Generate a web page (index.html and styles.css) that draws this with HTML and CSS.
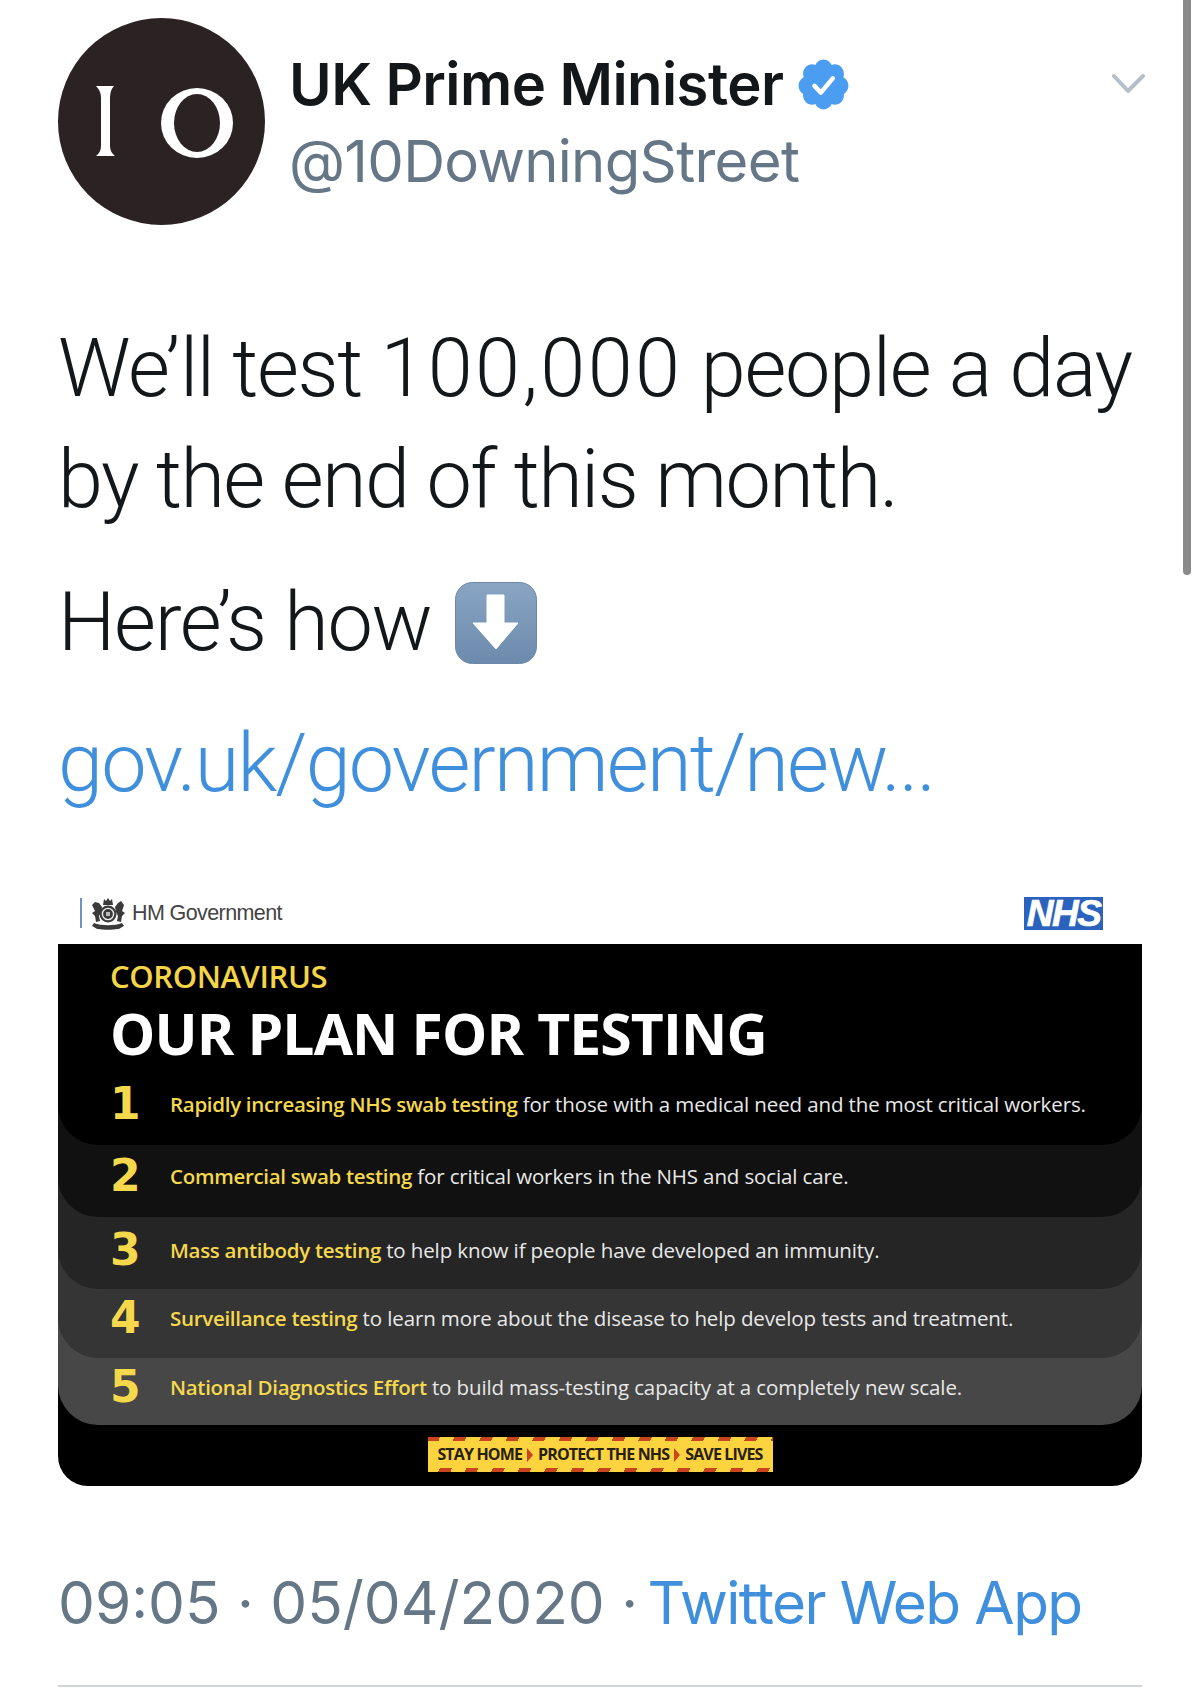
FILE: index.html
```html
<!DOCTYPE html>
<html lang="en">
<head>
<meta charset="utf-8">
<title>UK Prime Minister tweet</title>
<link rel="stylesheet" href="styles.css">
</head>
<body>
<div class="scrollbar"></div>
<main class="tweet">
  <header class="head">
    <svg class="avatar" viewBox="0 0 207 207" role="img" aria-label="10">
      <circle cx="103.5" cy="103.5" r="103.5" fill="#2b2224"/>
      <path fill="#fff" d="M38 68 L56 68 Q52 72 52 80 L52 128 Q52 134 57 138 L38 138 Q43 134 43 128 L43 80 Q43 73 38 68z"/>
      <ellipse cx="139" cy="105" rx="36" ry="35" fill="#fff"/>
      <ellipse cx="139" cy="105" rx="23" ry="29" fill="#2b2224"/>
    </svg>
    <div class="names">
      <div class="name">UK Prime Minister
        <svg class="badge" viewBox="0 0 24 24"><path fill="#4a9df0" d="M22.5 12.5c0-1.58-.875-2.95-2.148-3.6.154-.435.238-.905.238-1.4 0-2.21-1.71-3.998-3.818-3.998-.47 0-.92.084-1.336.25C14.818 2.415 13.51 1.5 12 1.5s-2.816.917-3.437 2.25c-.415-.165-.866-.25-1.336-.25-2.11 0-3.818 1.79-3.818 4 0 .494.083.964.237 1.4-1.272.65-2.147 2.018-2.147 3.6 0 1.495.782 2.798 1.942 3.486-.02.17-.032.34-.032.514 0 2.21 1.708 4 3.818 4 .47 0 .92-.086 1.335-.25.62 1.334 1.926 2.25 3.437 2.25 1.512 0 2.818-.916 3.437-2.25.415.163.865.248 1.336.248 2.11 0 3.818-1.79 3.818-4 0-.174-.012-.344-.033-.513 1.158-.687 1.943-1.99 1.943-3.484z"/><path fill="none" stroke="#fff" stroke-width="1.9" stroke-linecap="round" stroke-linejoin="round" d="M8.2 12.6l2.7 2.8 5-6"/></svg>
      </div>
      <div class="handle">@10DowningStreet</div>
    </div>
    <svg class="chevron" viewBox="0 0 34 22"><path fill="none" stroke="#b4bfc9" stroke-width="4" stroke-linecap="round" stroke-linejoin="round" d="M3 3l14 15L32 3"/></svg>
  </header>

  <div class="body">
    <p class="lines"><span class="l1">We’ll test <span class="digits">100,000</span> people a day</span><br><span class="l2">by the end of this month.</span></p>
    <p class="how">Here’s how
      <svg class="emoji" viewBox="0 0 82 82"><defs><linearGradient id="eg" x1="0" y1="0" x2="0" y2="1"><stop offset="0" stop-color="#8aa5c4"/><stop offset="1" stop-color="#6c8aac"/></linearGradient></defs><rect x=".5" y=".5" width="81" height="81" rx="17" fill="url(#eg)" stroke="#6d88a6"/><path fill="#fff" stroke="#fff" stroke-linejoin="round" d="M32 13h17v28h14L41 67 18 41h14z"/></svg>
    </p>
    <p class="link">gov.uk/government/new...</p>
  </div>

  <figure class="card">
    <div class="card-top">
      <div class="hmg">
        <svg class="crest" viewBox="0 0 36 34">
          <g fill="#3a3a3a">
            <path d="M14 3l2 2 2-3 2 3 2-2 1 6H13z"/>
            <circle cx="18" cy="18" r="8.5"/>
            <path d="M2 9l3-3 4 1 3 4-1 5-2 4 1 5-4 1-1-6-3-3 3-2zM34 9l-3-4-3 2-3 4 1 5 2 4-1 5 4 1 1-6 3-3-3-2z"/>
            <path d="M4 27c7 3 21 3 28 0l2 3c-3 1-4 3-6 3-6 1-14 1-20 0-2 0-3-2-6-3z"/>
          </g>
          <circle cx="18" cy="18" r="5.6" fill="none" stroke="#eee" stroke-width="1.4"/>
          <path d="M16 16h4v4h-4z" fill="#bbb"/>
        </svg>
        <span class="hmg-text">HM Government</span>
      </div>
      <div class="nhs">NHS</div>
    </div>
    <div class="board">
      <div class="title">
        <div class="kicker">CORONAVIRUS</div>
        <h1>OUR PLAN FOR TESTING</h1>
      </div>
      <div class="step s1"><div class="in"><span class="num">1</span><span class="tx"><b>Rapidly increasing NHS swab testing</b> for those with a medical need and the most critical workers.</span></div></div>
      <div class="step s2"><div class="in"><span class="num">2</span><span class="tx"><b>Commercial swab testing</b> for critical workers in the NHS and social care.</span></div></div>
      <div class="step s3"><div class="in"><span class="num">3</span><span class="tx"><b>Mass antibody testing</b> to help know if people have developed an immunity.</span></div></div>
      <div class="step s4"><div class="in"><span class="num">4</span><span class="tx"><b>Surveillance testing</b> to learn more about the disease to help develop tests and treatment.</span></div></div>
      <div class="step s5"><div class="in"><span class="num">5</span><span class="tx"><b>National Diagnostics Effort</b> to build mass-testing capacity at a completely new scale.</span></div></div>
      <div class="foot">
        <div class="banner">STAY HOME<i class="tri"></i>PROTECT THE NHS<i class="tri"></i>SAVE LIVES</div>
      </div>
    </div>
  </figure>

  <footer class="meta"><span class="when">09:05 · 05/04/2020 ·</span> <span class="app">Twitter Web App</span></footer>
</main>
</body>
</html>
```
FILE: styles.css
```css
html, body { margin: 0; padding: 0; background: #fff; }
body { width: 1200px; height: 1689px; overflow: hidden; position: relative; font-family: "Inter", "Liberation Sans", sans-serif; }
.scrollbar { position: absolute; top: 0; right: 9px; width: 8px; height: 575px; border-radius: 0 0 4px 4px; background: #8a8a8a; }
.tweet { padding: 18px 58px 0 58px; }
.head { display: flex; align-items: flex-start; height: 207px; }
.avatar { width: 207px; height: 207px; flex: none; }
.names { margin-left: 24px; padding-top: 27px; flex: 1; }
.name { font-size: 58px; font-weight: 600; line-height: 78px; color: #14171a; letter-spacing: -.55px; display: flex; align-items: center; gap: 12px; }
.badge { width: 57px; height: 57px; flex: none; }
.handle { font-size: 58px; line-height: 76px; color: #657786; letter-spacing: -.68px; font-weight: 400; }
.chevron { width: 34px; height: 22px; margin: 55px -3px 0 0; flex: none; }

.body { color: #14171a; font-family: "Roboto", "Liberation Sans", sans-serif; font-weight: 300; font-size: 81px; letter-spacing: -1.3px; margin-top: 88px; white-space: nowrap; }
.body p { margin: 0; }
.lines { line-height: 111px; }
.digits { letter-spacing: 2.4px; }
.l2 { letter-spacing: -1.6px; }
.how { line-height: 112px; margin-top: 32px !important; display: flex; align-items: center; gap: 24px; }
.emoji { width: 82px; height: 82px; flex: none; }
.link { color: #3f8fdc; line-height: 112px; margin-top: 29px !important; letter-spacing: -1.8px; }

.card { margin: 51px 0 0; }
.card-top { height: 73px; display: flex; justify-content: space-between; align-items: center; padding: 11px 39px 0 22px; box-sizing: border-box; }
.hmg { display: flex; align-items: center; border-left: 2px solid #6f92c4; padding-left: 8px; height: 30px; }
.crest { width: 36px; height: 34px; flex: none; }
.hmg-text { font-family: "Liberation Sans", sans-serif; font-size: 21.5px; color: #444; letter-spacing: -.6px; margin-left: 6px; }
.nhs { width: 79px; height: 33px; background: #2a62bd; color: #fff; font-family: "Liberation Sans", sans-serif; font-weight: 700; font-style: italic; font-size: 37px; line-height: 33px; text-align: center; letter-spacing: -1.5px; -webkit-text-stroke: .7px #fff; }
.board { background: #000; border-radius: 0 0 30px 30px; overflow: hidden; font-family: "Open Sans", sans-serif; color: #e8e8e8; }
.title { padding: 14px 0 0 52px; height: 119px; box-sizing: border-box; }
.kicker { color: #f4d548; font-size: 31px; font-weight: 600; line-height: 36px; letter-spacing: -.4px; }
h1 { margin: 7px 0 0; color: #fff; font-size: 57px; font-weight: 700; line-height: 64px; letter-spacing: -.87px; white-space: nowrap; }
.in { display: flex; align-items: center; border-radius: 0 0 40px 40px; padding: 0 0 10px 52px; box-sizing: border-box; height: 100%; }
.step { height: 72px; }
.s1 { height: 82px; background: #111; } .s1 .in { background: #000; padding-bottom: 0; }
.s2 { background: #252525; } .s2 .in { background: #111; }
.s3 { background: #353535; } .s3 .in { background: #252525; padding-bottom: 6px; }
.s4 { height: 69px; background: #474747; } .s4 .in { background: #353535; padding-bottom: 12px; }
.s5 { height: 67px; background: #000; } .s5 .in { background: #474747; padding-bottom: 9px; }
.num { width: 60px; flex: none; color: #f6d84c; font-family: "DejaVu Sans", sans-serif; font-weight: 700; font-size: 44px; line-height: 1; }
.tx { font-size: 20.5px; white-space: nowrap; letter-spacing: -.12px; }
.tx b { color: #f6d84c; font-weight: 600; letter-spacing: -.3px; }
.foot { height: 61px; display: flex; justify-content: center; padding-top: 12px; box-sizing: border-box; }
.banner { width: 345px; height: 35px; box-sizing: border-box; background: linear-gradient(#fdd33f, #fdd33f) center / 100% 27px no-repeat, repeating-linear-gradient(115deg, #c8451f 0 11px, #fdd33f 11px 24px); color: #262010; font-weight: 700; font-size: 16px; line-height: 35px; text-align: center; white-space: nowrap; letter-spacing: -.85px; }
.tri { display: inline-block; width: 0; height: 0; border-left: 6px solid #c8451f; border-top: 7px solid transparent; border-bottom: 7px solid transparent; margin: 0 5px; vertical-align: -2px; }

.meta { margin-top: 79px; padding-bottom: 44px; font-size: 58.5px; font-weight: 400; line-height: 76px; border-bottom: 2px solid #d0d4d8; white-space: nowrap; }
.when { color: #657786; letter-spacing: 0; }
.app { color: #3f8fdc; letter-spacing: -1.6px; margin-left: -7px; }
```
